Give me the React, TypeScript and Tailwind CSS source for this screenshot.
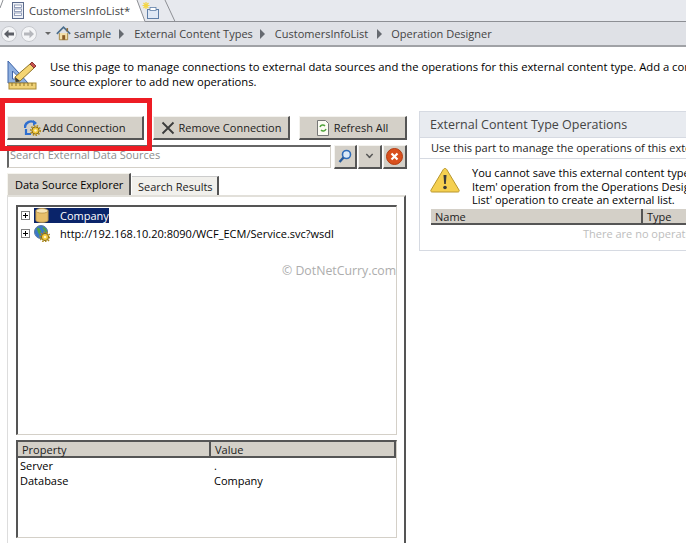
import { ReactNode } from "react";

const font = "font-['Open_Sans',_'Noto_Sans',sans-serif]";

const DocIcon = () => (
  <svg className="shrink-0" width="14" height="17" viewBox="0 0 14 17">
    <rect x="1.5" y="0.5" width="11" height="16" fill="#eef1f7" stroke="#5b6b8c" />
    <rect x="3.5" y="3" width="7" height="2.5" fill="#fff" stroke="#7d8bab" strokeWidth="0.8" />
    <rect x="3.5" y="7" width="7" height="2.5" fill="#fff" stroke="#7d8bab" strokeWidth="0.8" />
    <rect x="3.5" y="11" width="7" height="2.5" fill="#fff" stroke="#7d8bab" strokeWidth="0.8" />
  </svg>
);

const NewTabIcon = () => (
  <svg className="shrink-0" width="18" height="18" viewBox="0 0 18 18">
    <rect x="5.5" y="7.5" width="11" height="9" fill="#dfe8f5" stroke="#5f7fa8" />
    <rect x="8" y="5.5" width="6" height="3" fill="#fff" stroke="#5f7fa8" strokeWidth="0.8" />
    <path d="M4 0v7M0.5 3.5h7M1.5 1l5 5M6.5 1l-5 5" stroke="#f3d545" strokeWidth="1.2" />
  </svg>
);

const NavCircle = ({ dim }: { dim?: boolean }) => (
  <svg className="shrink-0" width="16" height="16" viewBox="0 0 16 16">
    <circle cx="8" cy="8" r="7.5" fill="#f4f5f7" stroke="#c6c8cd" />
    <path
      d={dim ? "M13 8 8.5 3.8v2.7H3v3h5.5v2.7z" : "M3 8l4.5-4.2v2.7H13v3H7.5v2.7z"}
      fill={dim ? "#b5b7bc" : "#5c5f66"}
    />
  </svg>
);

const HomeIcon = () => (
  <svg className="block shrink-0" width="15" height="15" viewBox="0 0 18 17">
    <path d="M4 8v8h10V8" fill="#f3dfa8" stroke="#9a7a34" />
    <rect x="7.5" y="10.5" width="3.5" height="5.5" fill="#8a5c26" />
    <path d="M1 9l8-8 8 8" fill="none" stroke="#4a6d8c" strokeWidth="2" />
    <rect x="12.5" y="2" width="2" height="4" fill="#8c6a3a" />
  </svg>
);

const Crumb = () => (
  <span className="block w-0 h-0 shrink-0 border-y-[5px] border-y-transparent border-l-[5px] border-l-[#666a70] border-r-0" />
);

const DesignIcon = () => (
  <svg className="shrink-0" width="32" height="32" viewBox="0 0 32 32">
    <path d="M1 2v22h20z M5.5 12v8h8z" fill="#8fb0e0" fillRule="evenodd" stroke="#3e64a8" />
    <rect x="2" y="24" width="27" height="6" fill="#f0d277" stroke="#a98a35" />
    <path d="M5 24v3M9 24v3M13 24v3M17 24v3M21 24v3M25 24v3" stroke="#8e7326" />
    <path d="M9 23l-1 -5L23 5l4 4L13 22z" fill="#f5d572" stroke="#8e7326" />
    <path d="M23 5l2-2 4 4-2 2z" fill="#c9544e" stroke="#8a3a36" />
    <path d="M9 23l-1-5 5 4z" fill="#3c3c3c" />
  </svg>
);

const GearBadge = ({ x, y }: { x: number; y: number }) => (
  <g transform={`translate(${x} ${y})`}>
    <circle cx="5" cy="5" r="3.6" fill="#f0c83c" stroke="#8a6c14" strokeWidth="1" />
    <circle cx="5" cy="5" r="4.8" fill="none" stroke="#b08c1c" strokeWidth="1.6" strokeDasharray="1.5 1.4" />
    <circle cx="5" cy="5" r="1.3" fill="#fff6c8" />
  </g>
);

const AddConnIcon = () => (
  <svg className="shrink-0" width="17" height="17" viewBox="0 0 17 17">
    <path d="M1 9a6 6 0 0 1 10-5" fill="none" stroke="#2f6fd0" strokeWidth="2.4" />
    <path d="M9 1l4 3-4 3z" fill="#2f6fd0" />
    <path d="M2 10v5h5" fill="none" stroke="#2f6fd0" strokeWidth="2.2" />
    <GearBadge x={6.5} y={6.5} />
  </svg>
);

const RemoveIcon = () => (
  <svg className="shrink-0" width="14" height="14" viewBox="0 0 14 14">
    <path d="M1.5 1.5l11 11M12.5 1.5l-11 11" stroke="#3c3c3c" strokeWidth="1.8" />
  </svg>
);

const RefreshDocIcon = () => (
  <svg className="shrink-0" width="12" height="16" viewBox="0 0 12 16">
    <path d="M.5.5h8l3 3v12H.5z" fill="#fbfbf2" stroke="#777" />
    <path d="M3 7a3 3 0 0 1 5-1M9 9a3 3 0 0 1-5 1" fill="none" stroke="#4fa33a" strokeWidth="1.5" />
  </svg>
);

const SearchIcon = () => (
  <svg className="shrink-0" width="14" height="15" viewBox="0 0 14 15">
    <circle cx="8.5" cy="5.5" r="4" fill="#dceaf8" stroke="#2f6cb8" strokeWidth="1.6" />
    <path d="M5.5 8.5L1.5 13" stroke="#2a5c9c" strokeWidth="2.4" />
  </svg>
);

const StopIcon = () => (
  <svg className="shrink-0" width="17" height="17" viewBox="0 0 17 17">
    <circle cx="8.5" cy="8.5" r="8" fill="#d9501e" stroke="#b33c12" />
    <path d="M5.5 5.5l6 6M11.5 5.5l-6 6" stroke="#fff" strokeWidth="2.2" />
  </svg>
);

const Plus = () => (
  <span className="relative block w-[9px] h-[9px] border border-[#808080] bg-white shrink-0">
    <span className="absolute left-[1px] top-[3px] w-[5px] h-px bg-black" />
    <span className="absolute left-[3px] top-[1px] w-px h-[5px] bg-black" />
  </span>
);

const DbIcon = () => (
  <svg className="shrink-0" width="14" height="15" viewBox="0 0 15 16">
    <path d="M1 3v10c0 3 13 3 13 0V3z" fill="#e8bf6a" stroke="#c09a4c" />
    <ellipse cx="7.5" cy="3" rx="6.5" ry="2.5" fill="#f8e6b8" stroke="#c09a4c" />
  </svg>
);

const GlobeIcon = () => (
  <svg className="shrink-0" width="16" height="17" viewBox="0 0 16 17">
    <circle cx="7" cy="7" r="6.5" fill="#3b78c8" stroke="#5a7ba0" />
    <path d="M3 3c3-1 3 2 4 3s-2 1-1 4-3-3-3-7zM9 2c3 1 4 3 4 6-2 0-2-2-3-3s-2-2-1-3z" fill="#55a53e" />
    <GearBadge x={6} y={7} />
  </svg>
);

const WarnIcon = () => (
  <svg className="shrink-0" width="30" height="27" viewBox="0 0 30 27">
    <path d="M15 1.5c1 0 1.500.5 2 1.500l12 20c.6 1.200 0 2-1.200 2H2.200C1 25 .4 24.200 1 23L13 3c.5-1 1-1.500 2-1.500z" fill="#f5d050" stroke="#b8962c" />
    <path d="M13.500 8h3l-.7 9h-1.600z" fill="#3a3a3a" />
    <circle cx="15" cy="20.500" r="1.800" fill="#3a3a3a" />
  </svg>
);

const TabOutline = () => (
  <svg className="absolute left-0 top-0" width="190" height="22" viewBox="0 0 190 22">
    <path d="M0 0H137L145 21.500H0z" fill="#fff" />
    <path d="M0 8L3 0M137 0L145 21.500M165 0L175 21.500" fill="none" stroke="#8d8f94" />
  </svg>
);

const ToolButton = ({ className, children }: { className: string; children: ReactNode }) => (
  <div
    className={`h-[24px] flex items-center justify-center bg-[#d4d0c8] border-t border-l border-t-[#f4f3ef] border-l-[#f4f3ef] border-r-2 border-b-2 border-r-[#555] border-b-[#555] ${className}`}
  >
    {children}
  </div>
);

export default function App() {
  return (
    <div className={`relative w-[686px] h-[543px] overflow-hidden bg-white text-[11px] leading-[15px] text-[#1c1c1c] ${font}`}>
      {/* document tabs */}
      <div className="relative h-[22px] flex items-center bg-[#e7e9ee] border-b border-[#8d8f94] text-[#444]">
        <TabOutline />
        <span className="relative ml-[11px]"><DocIcon /></span>
        <span className="relative ml-[4px] text-[11.2px] whitespace-nowrap">CustomersInfoList*</span>
        <span className="relative ml-[12px]"><NewTabIcon /></span>
      </div>

      {/* breadcrumb */}
      <div className="h-[25px] flex items-center bg-[#dfe1e6] border-b-2 border-[#a0a2a6] pl-[1px] text-[#444] whitespace-nowrap">
        <NavCircle />
        <span className="ml-[4px]"><NavCircle dim /></span>
        <span className="ml-[8px] block w-0 h-0 border-x-[3px] border-x-transparent border-t-[3px] border-t-[#666] border-b-0" />
        <span className="ml-[5px]"><HomeIcon /></span>
        <span className="ml-[3px]">sample</span>
        <span className="ml-[8px]"><Crumb /></span>
        <span className="ml-[10px]">External Content Types</span>
        <span className="ml-[7px]"><Crumb /></span>
        <span className="ml-[10px]">CustomersInfoList</span>
        <span className="ml-[9px]"><Crumb /></span>
        <span className="ml-[9px]">Operation Designer</span>
      </div>

      {/* intro */}
      <div className="flex pt-[12px] pl-[7px] h-[64px]">
        <DesignIcon />
        <p className="ml-[11px] whitespace-nowrap text-[11.25px] text-black">
          Use this page to manage connections to external data sources and the operations for this external content type. Add a connection and use the
          <br />
          source explorer to add new operations.
        </p>
      </div>

      <div className="flex">
        {/* left column */}
        <div className="w-[419px] shrink-0 pl-[7px] pt-[5px] pr-[12px]">
          <div className="flex gap-[9px]">
            <ToolButton className="w-[137px] gap-[1px]">
              <AddConnIcon />
              <span className="text-[11.2px]">Add Connection</span>
            </ToolButton>
            <ToolButton className="w-[137px] gap-[4px]">
              <RemoveIcon />
              <span>Remove Connection</span>
            </ToolButton>
            <ToolButton className="w-[108px] gap-[5px]">
              <RefreshDocIcon />
              <span>Refresh All</span>
            </ToolButton>
          </div>

          <div className="flex mt-[5px] h-[24px]">
            <div className="w-[324px] h-[23px] border-t-2 border-l-2 border-[#666] border-r border-b border-r-[#d4d0c8] border-b-[#d4d0c8] pl-px text-[#8d8d8d] leading-[16px]">
              Search External Data Sources
            </div>
            <ToolButton className="w-[23px] ml-[3px]">
              <SearchIcon />
            </ToolButton>
            <ToolButton className="w-[24px] ml-[1px]">
              <span className="w-[7px] h-[7px] border-r-2 border-b-2 border-[#555] rotate-45 scale-75 -mt-1" />
            </ToolButton>
            <ToolButton className="w-[24px] ml-[1px]">
              <StopIcon />
            </ToolButton>
          </div>

          {/* source tabs */}
          <div className="flex items-end mt-[4px] h-[22px]">
            <div className="w-[124px] h-[22px] pt-[3px] pl-[7px] bg-[#d4d0c8] border-t border-l border-t-[#f5f4ee] border-l-[#f5f4ee] border-r-2 border-r-[#555] text-black">
              Data Source Explorer
            </div>
            <div className="w-[87px] h-[19px] pl-[6px] leading-[20px] bg-[#f1f0ec] border-t border-t-[#ccc] border-r-2 border-r-[#555] ml-px text-[#222]">
              Search Results
            </div>
          </div>

          {/* explorer panel */}
          <div className="h-[350px] w-[399px] pt-[8px] pl-[8px] bg-white border-l border-l-[#ddd] border-t-2 border-t-[#e2e0da] border-r-2 border-r-[#555]">
            <div className="w-[381px] h-[230px] border-t-2 border-l-2 border-[#555] border-r border-b border-r-[#d4d0c8] border-b-[#d4d0c8] pl-[3px] text-black">
              <div className="flex items-center h-[17px]">
                <Plus />
                <div className="ml-[4px] w-[75px] h-[15px] flex items-center bg-[#0a246a] text-white">
                  <span className="ml-px"><DbIcon /></span>
                  <span className="ml-[11px] whitespace-nowrap">Company</span>
                </div>
              </div>
              <div className="flex items-center h-[18px]">
                <Plus />
                <span className="ml-[4px]"><GlobeIcon /></span>
                <span className="ml-[10px] whitespace-nowrap">http://192.168.10.20:8090/WCF_ECM/Service.svc?wsdl</span>
              </div>
            </div>

            <div className="mt-[5px] w-[381px] h-[98px] border-t-2 border-l-2 border-[#555] border-r border-b border-r-[#d4d0c8] border-b-[#d4d0c8] text-black">
              <div className="flex h-[16px] bg-[#d4d0c8] border-b-2 border-[#555] border-r-2 border-r-[#555] text-[#222] leading-[15px]">
                <div className="w-[193px] pl-[4px] border-r-2 border-[#555]">Property</div>
                <div className="pl-[4px]">Value</div>
              </div>
              <div className="flex h-[15px] pl-[2px]">
                <span className="w-[194px]">Server</span>
                <span>.</span>
              </div>
              <div className="flex h-[15px] pl-[2px]">
                <span className="w-[194px]">Database</span>
                <span>Company</span>
              </div>
            </div>
          </div>
        </div>

        {/* right panel */}
        <div className="flex-1 min-w-0 h-[140px] border-t border-l border-b border-[#d6dae2] overflow-hidden">
          <div className="h-[26px] pl-[10px] flex items-center bg-[#e8ebf0] text-[12.5px] text-[#444] whitespace-nowrap border-b border-[#d6dae2]">
            External Content Type Operations
          </div>
          <div className="h-[21px] pl-[11px] pb-[2px] flex items-center whitespace-nowrap border-b border-[#d6dae2] text-[#222]">
            Use this part to manage the operations of this external content type.
          </div>
          <div className="flex pl-[10px] pt-[8px] h-[50px] whitespace-nowrap">
            <WarnIcon />
            <p className="ml-[12px] -mt-[1px] leading-[13.5px] text-black">
              You cannot save this external content type without defining a 'Read
              <br />
              Item' operation from the Operations Designer. Create a 'Read
              <br />
              List' operation to create an external list.
            </p>
          </div>
          <div className="ml-[11px] flex h-[16px] leading-[15px] bg-[#d4d0c8] border-b-2 border-[#555] text-[#222]">
            <div className="w-[212px] pl-[4px] border-r-2 border-[#555] shrink-0">Name</div>
            <div className="pl-[4px]">Type</div>
          </div>
          <div className="ml-[163px] mt-[1px] whitespace-nowrap text-[#bdbdbd]">There are no operations defined</div>
        </div>
      </div>

      {/* watermark */}
      <div className="absolute left-[282px] top-[263px] text-[12.3px] text-[#adadad] whitespace-nowrap">© DotNetCurry.com</div>

      {/* red highlight */}
      <div className="absolute left-0 top-[98px] w-[152px] h-[53px] border-[5px] border-[#ed1c24]" />
    </div>
  );
}
